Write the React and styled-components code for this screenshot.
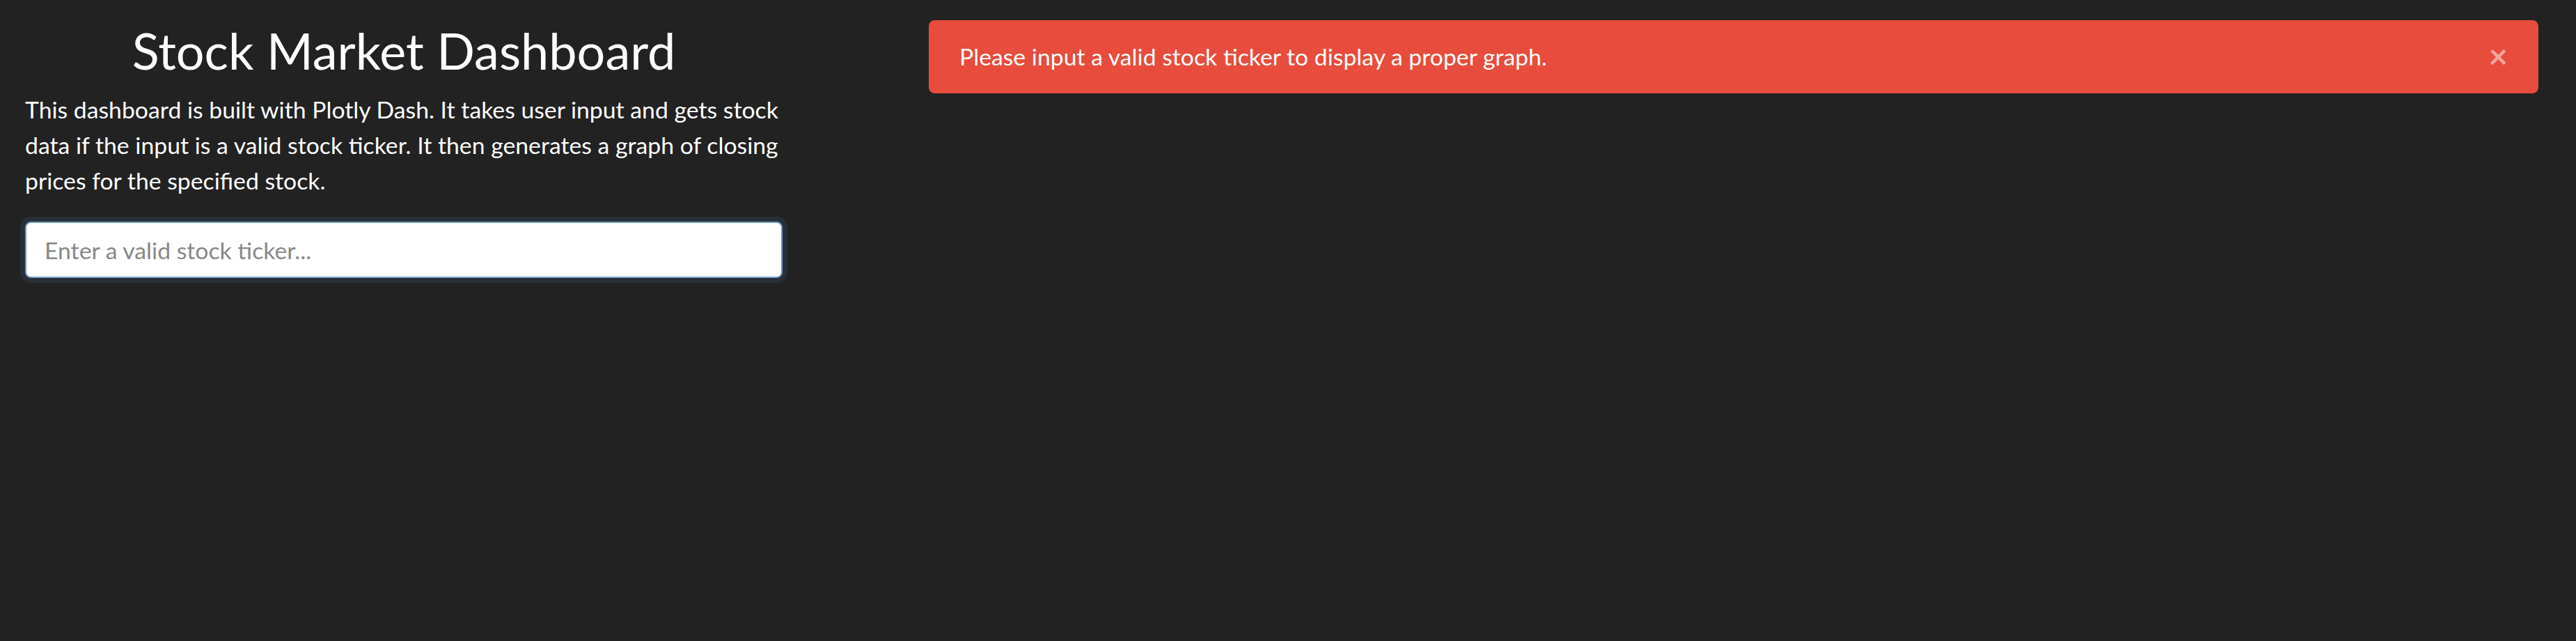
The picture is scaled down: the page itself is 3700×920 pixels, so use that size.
import styled, { createGlobalStyle } from "styled-components";

const GlobalStyle = createGlobalStyle`
  html, body {
    margin: 0;
    padding: 0;
    background: #222222;
  }

  body {
    font-family: Lato, "Open Sans", "Liberation Sans", sans-serif;
    color: #ffffff;
  }

  * {
    box-sizing: border-box;
  }
`;

const Page = styled.main`
  display: flex;
  align-items: flex-start;
  gap: 210px;
  min-height: 100vh;
  padding: 29px 54px 0 36px;
`;

const Sidebar = styled.section`
  flex: none;
  width: 1088px;
`;

const Title = styled.h1`
  margin: 0 0 17px;
  font-size: 72px;
  font-weight: 400;
  line-height: 1.2;
  text-align: center;
  color: #ffffff;
`;

const Intro = styled.p`
  margin: 0 0 34px;
  font-size: 33.75px;
  line-height: 1.5;
`;

const TickerInput = styled.input`
  display: block;
  width: 100%;
  height: 81px;
  padding: 0 26px;
  font-family: inherit;
  font-size: 33.75px;
  line-height: 1.5;
  color: #464646;
  caret-color: #222;
  background: #ffffff;
  border: 2px solid #739ac2;
  border-radius: 8.4px;
  box-shadow: 0 0 0 7px rgba(55, 90, 127, 0.25);
  outline: none;

  &::placeholder {
    color: #888888;
    opacity: 1;
  }
`;

const Alert = styled.div`
  position: relative;
  flex: 1;
  padding: 25px 135px 25px 42px;
  font-size: 33.75px;
  line-height: 1.5;
  color: #ffffff;
  background: #e74c3c;
  border: 2px solid #e74c3c;
  border-radius: 8.4px;
`;

const CloseButton = styled.button`
  position: absolute;
  top: 0;
  right: 0;
  padding: 25px 42px;
  font-family: inherit;
  font-size: 47.5px;
  font-weight: 700;
  line-height: 1;
  color: #ffffff;
  opacity: 0.5;
  background: transparent;
  border: 0;
  cursor: pointer;
`;

function App() {
  return (
    <>
      <GlobalStyle />
      <Page>
        <Sidebar>
          <Title>Stock Market Dashboard</Title>
          <Intro>
            This dashboard is built with Plotly Dash. It takes user input and
            gets stock data if the input is a valid stock ticker. It then
            generates a graph of closing prices for the specified stock.
          </Intro>
          <TickerInput
            type="text"
            placeholder="Enter a valid stock ticker..."
            autoFocus
          />
        </Sidebar>

        <Alert role="alert">
          Please input a valid stock ticker to display a proper graph.
          <CloseButton type="button" aria-label="Close">
            ×
          </CloseButton>
        </Alert>
      </Page>
    </>
  );
}

export default App;
